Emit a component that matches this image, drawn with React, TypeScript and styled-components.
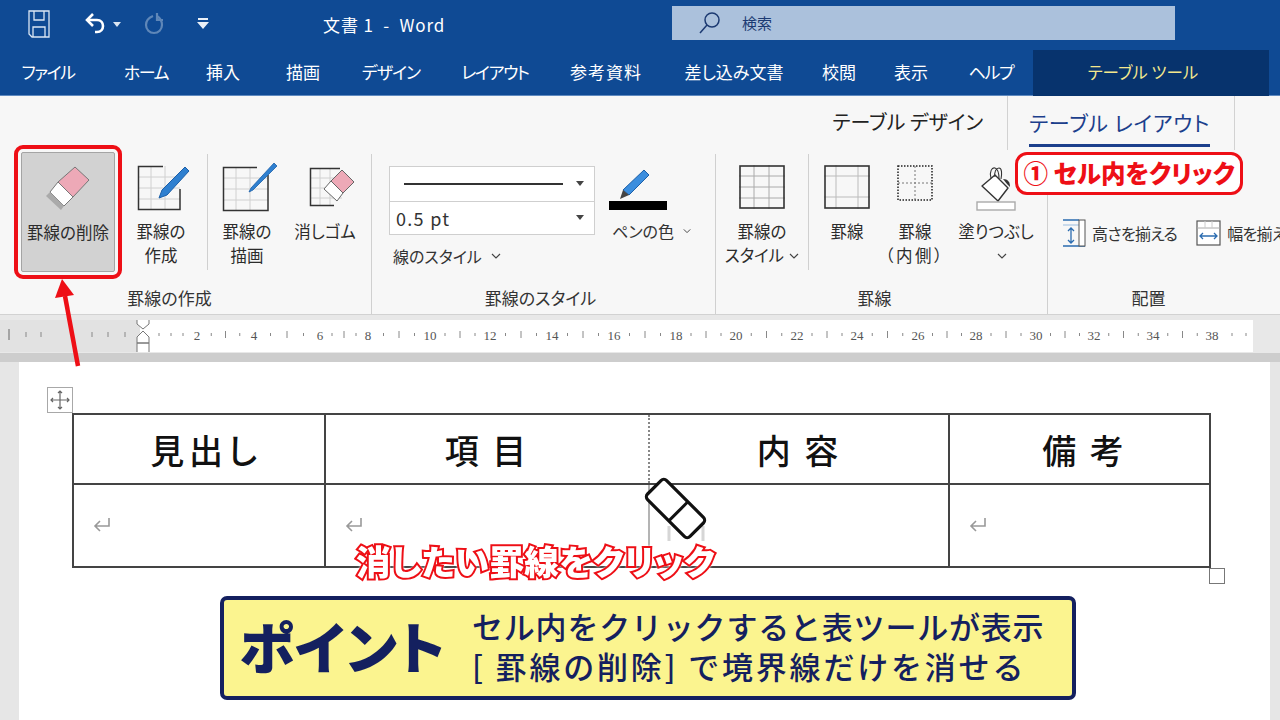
import React from 'react';
import styled, { createGlobalStyle } from 'styled-components';

const GlobalStyle = createGlobalStyle`
    html, body {
        margin: 0;
        padding: 0;
        width: 1280px;
        height: 720px;
        overflow: hidden;
        background: #e6e6e6;
        font-family: "Noto Sans CJK JP", "Liberation Sans", sans-serif;
    }
`;

const Screen = styled.div`
    position: relative;
    width: 1280px;
    height: 720px;
    overflow: hidden;
    font-feature-settings: "palt";
`;

const TitleBar = styled.div`
    height: 48px;
    background: #0f4a94;
    display: flex;
    align-items: center;
    color: #fff;
`;

const QuickIcons = styled.div`
    width: 323px;
    display: flex;
    align-items: center;
    padding-left: 27px;
    box-sizing: border-box;
`;

const DocTitle = styled.div`
    width: 349px;
    font-size: 17px;
    letter-spacing: 0.9px;
    white-space: pre;
`;

const SearchBox = styled.div`
    width: 503px;
    height: 34px;
    margin-top: -3px;
    background: #abc1dc;
    display: flex;
    align-items: center;
    padding-left: 26px;
    box-sizing: border-box;
    gap: 20px;
    color: #1c3a72;
    font-size: 15px;
`;

const TabBar = styled.div`
    height: 48px;
    background: #0f4a94;
    display: flex;
    color: #fff;
    border-bottom: 1px solid #5f8ac0;
    box-sizing: border-box;
`;

const Tab = styled.div<{ $w: number; $track?: number }>`
    width: ${(p) => p.$w}px;
    height: 48px;
    line-height: 48px;
    text-align: center;
    font-size: 17px;
    letter-spacing: ${(p) => p.$track ?? 0}px;
    white-space: nowrap;
`;

const ToolsTab = styled.div`
    width: 236px;
    height: 46px;
    margin: 2px 0 0 15px;
    padding-right: 16px;
    box-sizing: border-box;
    background: #07336d;
    color: #f4e88d;
    font-size: 16.5px;
    line-height: 44px;
    text-align: center;
    white-space: pre;
`;

const Ribbon = styled.div`
    height: 218px;
    background: #f7f7f7;
`;

const ContextTabs = styled.div`
    height: 54px;
    display: flex;
    justify-content: flex-end;
    padding-right: 45px;
    align-items: stretch;
`;

const ContextTab = styled.div<{ $active?: boolean }>`
    font-size: ${(p) => (p.$active ? 21 : 20)}px;
    letter-spacing: ${(p) => (p.$active ? 0.8 : 0)}px;
    white-space: pre;
    line-height: 52px;
    color: ${(p) => (p.$active ? '#1c3f8c' : '#222')};
    padding: ${(p) => (p.$active ? '0 24px 0 21px' : '0 24px 0 0')};
    ${(p) => p.$active && 'border-left: 1px solid #d2d2d2; border-right: 1px solid #d2d2d2;'}
`;

const ActiveLabel = styled.span`
    display: block;
    height: 48px;
    line-height: 52px;
    border-bottom: 3px solid #1c3f8c;
`;

const Groups = styled.div`
    height: 164px;
    display: grid;
    grid-template-columns: 372px 344px 332px 232px;
`;

const Group = styled.div<{ $last?: boolean }>`
    display: grid;
    grid-template-rows: 130px 1fr;
    border-right: ${(p) => (p.$last ? 'none' : '1px solid #d0d0d0')};
    margin-top: 4px;
    min-width: 0;
`;

const GroupBody = styled.div`
    display: flex;
    margin-top: -4px;
    padding-top: 2px;
`;

const GroupLabel = styled.div<{ $shift: number }>`
    font-size: 17px;
    color: #333;
    text-align: center;
    margin-top: 1px;
    padding-right: ${(p) => p.$shift}px;
`;

const Tool = styled.div<{ $w: number; $ml?: number }>`
    width: ${(p) => p.$w}px;
    margin-left: ${(p) => p.$ml ?? 0}px;
    height: 120px;
    flex: none;
    display: flex;
    flex-direction: column;
    align-items: center;
    padding-top: 13px;
    box-sizing: border-box;
    font-size: 16.5px;
    line-height: 24px;
    color: #2c2c2c;
    text-align: center;
    white-space: pre;
`;

const SelectedTool = styled(Tool)`
    background: #d2d2d2;
    border: 1px solid #a4a4a4;
    outline: 4px solid #ee0f16;
    outline-offset: 3px;
    border-radius: 2px;
`;

const IconSlot = styled.div<{ $dx?: number; $dy?: number }>`
    height: 54px;
    display: flex;
    justify-content: center;
    align-items: flex-start;
    padding-left: ${(p) => p.$dx ?? 0}px;
    & > svg {
        margin-top: ${(p) => p.$dy ?? 0}px;
    }
`;

const Parens = styled.span`
    letter-spacing: 2.5px;
`;

const Divider = styled.div`
    width: 1px;
    height: 116px;
    margin-top: 2px;
    background: #d0d0d0;
    flex: none;
`;

const StyleColumn = styled.div`
    margin: 14px 0 0 17px;
    width: 206px;
    flex: none;
`;

const Combo = styled.div`
    border: 1px solid #cfcfcf;
    background: #fff;
    height: 69px;
    box-sizing: border-box;
    display: grid;
    grid-template-rows: 1fr 1fr;
`;

const ComboRow = styled.div`
    display: flex;
    align-items: center;
    justify-content: space-between;
    padding: 0 10px 0 6px;
    font-size: 18px;
    letter-spacing: 1.3px;
    color: #333;
    & + & {
        border-top: 1px solid #cfcfcf;
    }
`;

const SampleLine = styled.div`
    width: 159px;
    height: 2px;
    margin-left: 8px;
    background: #333;
`;

const Caret = styled.div`
    width: 0;
    height: 0;
    border-left: 4px solid transparent;
    border-right: 4px solid transparent;
    border-top: 5px solid #444;
`;

const StyleLabel = styled.div`
    font-size: 16px;
    color: #333;
    margin: 9px 0 0 4px;
    display: flex;
    align-items: center;
    gap: 9px;
`;

const PenColumn = styled.div`
    margin: 17px 0 0 14px;
    width: 82px;
    flex: none;
    font-size: 16px;
    color: #333;
    white-space: nowrap;
`;

const PenLabel = styled.div`
    display: flex;
    align-items: center;
    gap: 9px;
    margin: 3px 0 0 3px;
`;

const Chevron = () => (
    <svg width="10" height="6" viewBox="0 0 10 6" fill="none" stroke="#444" strokeWidth="1.2">
        <path d="M1 1l4 4 4-4" />
    </svg>
);

const InlineChevron = styled.span`
    display: inline-block;
    margin-left: 5px;
    line-height: 0;
    vertical-align: 3px;
`;

const BucketChevron = styled.span`
    display: block;
    line-height: 0;
    margin: 9px 0 0 12px;
`;

const AlignColumn = styled.div`
    display: flex;
    align-items: center;
    height: 30px;
    margin: 66px 0 0 15px;
    gap: 6px;
    font-size: 16px;
    letter-spacing: -0.7px;
    color: #333;
    white-space: nowrap;
`;

const AlignSpacer = styled.div`
    width: 7px;
    flex: none;
`;

const RulerBar = styled.div`
    height: 48px;
    background: linear-gradient(#e8e8e8 38px, #cdcdcd 38px);
    border-top: 1px solid #d2d2d2;
    box-sizing: border-box;
    padding-top: 5px;
`;

const DocArea = styled.div`
    height: 358px;
    background: #e6e6e6;
    padding-left: 19px;
`;

const Page = styled.div`
    width: 1251px;
    height: 358px;
    background: #fff;
    padding: 51px 0 0 53px;
    box-sizing: border-box;
`;

const TableWrap = styled.div`
    position: relative;
    width: 1137px;
`;

const MoveHandle = styled.div`
    position: absolute;
    left: -25px;
    top: -26px;
    width: 24px;
    height: 24px;
    border: 1px solid #a8a8a8;
    display: flex;
    align-items: center;
    justify-content: center;
    background: #fff;
`;

const ResizeHandle = styled.div`
    position: absolute;
    right: -16px;
    bottom: -16px;
    width: 14px;
    height: 14px;
    border: 1px solid #777;
    background: #fff;
`;

const Table = styled.table`
    width: 1137px;
    border-collapse: collapse;
    table-layout: fixed;
`;

const HeadCell = styled.th<{ $w: number; $pad?: number; $track?: number; $dotted?: boolean; $noRight?: boolean }>`
    width: ${(p) => p.$w}px;
    height: 70px;
    padding: 0 0 0 ${(p) => p.$pad ?? 0}px;
    border: 2px solid #444;
    ${(p) => p.$dotted && 'border-left: 2px dotted #888;'}
    ${(p) => p.$noRight && 'border-right: none;'}
    font-size: 34px;
    font-weight: 500;
    color: #111;
    letter-spacing: ${(p) => p.$track ?? 3}px;
    box-sizing: border-box;
    white-space: pre;
`;

const BodyCell = styled.td<{ $erased?: boolean; $noRight?: boolean }>`
    height: 83px;
    padding: 3px 0 0 19px;
    border: 2px solid #444;
    ${(p) => p.$erased && 'border-left: 2px solid #b4b4b4;'}
    ${(p) => p.$noRight && 'border-right: none;'}
    box-sizing: border-box;
`;

const PointBox = styled.div`
    width: 856px;
    height: 104px;
    margin: 28px 0 0 148px;
    box-sizing: border-box;
    background: #fbf48f;
    border: 4px solid #14205f;
    border-radius: 7px;
    display: flex;
    align-items: center;
    color: #14205f;
    padding-left: 15px;
`;

const PointTitle = styled.div`
    width: 233px;
    flex: none;
    margin-top: -8px;
    font-size: 56px;
    font-weight: 900;
    letter-spacing: 1px;
    white-space: nowrap;
`;

const PointText = styled.div`
    margin-top: -4px;
    font-size: 31px;
    font-weight: 500;
    line-height: 40px;
    white-space: pre;
    font-feature-settings: normal;
`;

const PointLine = styled.div<{ $track: number }>`
    height: 40px;
    letter-spacing: ${(p) => p.$track}px;
`;

const Callout = styled.div`
    position: absolute;
    left: 1015px;
    top: 152px;
    width: 228px;
    height: 43px;
    box-sizing: border-box;
    border: 3px solid #ee0f16;
    border-radius: 12px;
    background: #fff;
    color: #ee0f16;
    font-size: 24.5px;
    font-weight: 900;
    line-height: 36px;
    text-align: center;
    white-space: pre;
`;

const RedNote = styled.div`
    position: absolute;
    left: 356px;
    top: 536px;
    font-size: 34.5px;
    font-weight: 900;
    line-height: 48px;
    letter-spacing: 0.4px;
    color: #fff;
    white-space: nowrap;
    -webkit-text-stroke: 4px #ee0f16;
    paint-order: stroke fill;
    filter: drop-shadow(0 0 1px #fff);
`;

const Overlay = styled.svg`
    position: absolute;
    left: 0;
    top: 0;
    pointer-events: none;
`;

const tool = { ink: '#333', grid: '#d0d0d0', blue: '#2f80d0' };

const Grid = ({ w, h, xs, ys, dark = tool.grid }: { w: number; h: number; xs: number[]; ys: number[]; dark?: string }) => (
    <g stroke={dark} strokeWidth="1" fill="none">
        {xs.map((x) => <path key={`x${x}`} d={`M${x} 0V${h}`} />)}
        {ys.map((y) => <path key={`y${y}`} d={`M0 ${y}H${w}`} />)}
    </g>
);

const BigEraser = () => (
    <svg width="44" height="45" viewBox="0 0 44 45">
        <path d="M29 1l14 13-16 17-15-15z" fill="#eda9b7" stroke="#777" strokeWidth="1" strokeLinejoin="round" />
        <path d="M12 16l15 15-9 9-14-14z" fill="#fff" stroke="#777" strokeWidth="1" strokeLinejoin="round" />
        <path d="M4 26l14 14-3 4-15-14z" fill="#aaa" />
    </svg>
);

const GridPenIcon = () => (
    <svg width="54" height="46" viewBox="0 0 54 46">
        <g transform="translate(1 1)">
            <Grid w={42} h={43} xs={[13, 27]} ys={[11, 22, 33]} />
            <path d="M25 0.5H0.5V43.5H42V23" fill="none" stroke={tool.ink} strokeWidth="1.5" />
        </g>
        <path d="M48 2l4 4-22 24-8 3 3-8z" fill={tool.blue} stroke="#1c5fa8" strokeWidth="1" />
    </svg>
);

const GridThinPenIcon = () => (
    <svg width="56" height="50" viewBox="0 0 56 50">
        <g transform="translate(1 5)">
            <Grid w={45} h={43} xs={[13, 27]} ys={[11, 22, 33]} />
            <path d="M34 0.5H0.5V43.5H45V8" fill="none" stroke={tool.ink} strokeWidth="1.5" />
        </g>
        <path d="M52 1l3 3-24 24-4 2 2-4z" fill={tool.blue} stroke="#1c5fa8" strokeWidth="0.8" />
    </svg>
);

const GridEraserIcon = () => (
    <svg width="46" height="40" viewBox="0 0 46 40">
        <g transform="translate(1 1)">
            <Grid w={32} h={37} xs={[10, 20]} ys={[10, 20, 30]} />
            <path d="M30 0.5H0.5V37.5H24" fill="none" stroke={tool.ink} strokeWidth="1.5" />
        </g>
        <path d="M33 3l12 12-11 11-12-12z" fill="#eda9b7" stroke="#666" />
        <path d="M22 14l12 12-6 8-13-12z" fill="#fff" stroke="#666" />
    </svg>
);

const PenColorIcon = () => (
    <svg width="58" height="42" viewBox="0 0 58 42">
        <path d="M35 1l5 5-20 20-6-5z" fill="#3c8ede" stroke="#1c5fa8" />
        <path d="M14 21l6 5-9 4z" fill="#444" />
        <rect x="0" y="32" width="58" height="9" fill="#000" />
    </svg>
);

const FullGridIcon = () => (
    <svg width="46" height="44" viewBox="0 0 46 44">
        <Grid w={46} h={44} xs={[15, 30]} ys={[11, 22, 33]} dark="#aaa" />
        <rect x="1" y="1" width="44" height="42" fill="none" stroke={tool.ink} strokeWidth="1.6" />
    </svg>
);

const BorderIcon = () => (
    <svg width="46" height="44" viewBox="0 0 46 44">
        <Grid w={46} h={44} xs={[12, 34]} ys={[11, 32]} dark="#bbb" />
        <rect x="1" y="1" width="44" height="42" fill="none" stroke={tool.ink} strokeWidth="1.6" />
    </svg>
);

const InnerBorderIcon = () => (
    <svg width="36" height="36" viewBox="0 0 36 36">
        <rect x="1" y="1" width="34" height="34" fill="none" stroke="#222" strokeWidth="1.5" strokeDasharray="1.5 1.5" />
        <path d="M18 1V35M1 18H35" fill="none" stroke="#777" strokeWidth="1" strokeDasharray="2 2" />
    </svg>
);

const BucketIcon = () => (
    <svg width="40" height="46" viewBox="0 0 40 46">
        <path d="M6 21l13-11 13 13-10 13z" fill="#fff" stroke="#333" strokeWidth="1.4" strokeLinejoin="round" />
        <path d="M15 13c-2-6 1-11 4-10s4 5 4 11M19 12c-1-5 1-9 4-9s3 6 2 11" fill="none" stroke="#333" strokeWidth="1.1" />
        <path d="M27 14c5 0 7 3 7 8l-3-3z" fill="#333" />
        <rect x="1" y="37" width="38" height="8" fill="#fff" stroke="#aaa" strokeWidth="1.4" />
    </svg>
);

const HeightIcon = () => (
    <svg width="23" height="28" viewBox="0 0 23 28" style={{ flex: 'none' }}>
        <path d="M0 1H16M0 27H22" stroke="#2b6cb0" strokeWidth="1.6" />
        <path d="M0 6H16" stroke="#9bbde0" strokeWidth="1" />
        <rect x="16" y="1" width="6" height="26" fill="#fff" stroke="#555" />
        <path d="M8 9V24M5 12l3-3 3 3M5 21l3 3 3-3" fill="none" stroke="#2b6cb0" strokeWidth="1.3" />
    </svg>
);

const WidthIcon = () => (
    <svg width="25" height="26" viewBox="0 0 25 26" style={{ flex: 'none' }}>
        <rect x="1" y="1" width="23" height="24" fill="#fff" stroke="#555" strokeWidth="1.2" />
        <path d="M1 8H24" stroke="#aaa" />
        <path d="M9 1V8M16 1V8" stroke="#ccc" />
        <path d="M4 16H21M7 13l-3 3 3 3M18 13l3 3-3 3" fill="none" stroke="#2b6cb0" strokeWidth="1.3" />
    </svg>
);

const ReturnMark = () => (
    <svg width="18" height="17" viewBox="0 0 18 17" fill="none" stroke="#999" strokeWidth="1.6">
        <path d="M16 1V9H2M7 4L2 9l5 5" />
    </svg>
);

const rulerLabels: [number, string][] = [
    [197, '2'], [254, '4'], [320, '6'], [368, '8'], [430, '10'], [490, '12'], [552, '14'], [614, '16'], [676, '18'],
    [736, '20'], [797, '22'], [857, '24'], [918, '26'], [976, '28'], [1036, '30'], [1094, '32'], [1153, '34'], [1212, '38'],
];

const Ruler = () => {
    const ticks: number[] = [];
    rulerLabels.forEach(([x], i) => {
        const next = rulerLabels[i + 1]?.[0];
        if (next) {
            const step = (next - x) / 4;
            ticks.push(x + step, x + step * 2, x + step * 3);
        }
    });
    return (
        <svg width="1280" height="32" viewBox="0 0 1280 32" style={{ display: 'block' }}>
            <rect x="140" width="1113" height="32" fill="#fff" />
            <rect width="140" height="32" fill="#e2e2e2" />
            <path d="M9 9V20" stroke="#666" strokeWidth="1" />
            {[26, 41, 92, 108, 125].map((x) => <path key={x} d={`M${x} 12V17`} stroke="#888" />)}
            {[159, 171, 183].map((x) => <path key={x} d={`M${x} 13V16`} stroke="#888" />)}
            {ticks.map((x, i) => (
                <path key={x} d={i % 3 === 1 ? `M${x} 11V18` : `M${x} 13V16`} stroke="#888" />
            ))}
            {[1232, 1246].map((x) => <path key={x} d={`M${x} 13V16`} stroke="#888" />)}
            {rulerLabels.map(([x, label]) => (
                <text key={label} x={x} y="20" textAnchor="middle" fontSize="13" fontFamily="'Liberation Serif', serif" fill="#555">
                    {label}
                </text>
            ))}
            <path d="M137 -1h12v5l-6 5-6-5z M143 11l6 6v6h-12v-6z M137 23h12v10h-12z" fill="#fff" stroke="#777" />
        </svg>
    );
};

const App: React.FC = () => {
    return (
        <Screen>
            <GlobalStyle />
            <TitleBar>
                <QuickIcons>
                    <svg width="24" height="28" viewBox="0 0 24 28" fill="none" stroke="#dbe6f3" strokeWidth="1.3">
                        <path d="M2 1H22V27H5L2 24z" />
                        <path d="M7 1V10H17V1M6 27V17H18V27" />
                    </svg>
                    <svg width="22" height="24" viewBox="0 0 22 24" fill="none" stroke="#fff" strokeWidth="2.6" style={{ marginLeft: 34 }}>
                        <path d="M8 2L2 8l6 6" />
                        <path d="M3 8h9c4 0 6 3 6 6s-2 6-6 6H10" />
                    </svg>
                    <svg width="8" height="5" viewBox="0 0 8 5" style={{ marginLeft: 6 }}>
                        <path d="M0 0h8L4 5z" fill="#dbe6f3" />
                    </svg>
                    <svg width="22" height="24" viewBox="0 0 22 24" fill="none" stroke="#5f87b8" strokeWidth="2.2" style={{ marginLeft: 23 }}>
                        <path d="M9 4C4 6 2 9 2 13a8 8 0 0 0 16 0c0-4-2-7-5-9" />
                        <path d="M13 1v7h6" />
                    </svg>
                    <svg width="12" height="12" viewBox="0 0 12 12" style={{ marginLeft: 31 }}>
                        <path d="M1 0h10v2H1zM0 4h12L6 11z" fill="#eaf0f8" />
                    </svg>
                </QuickIcons>
                <DocTitle>{'文書 1  -  Word'}</DocTitle>
                <SearchBox>
                    <svg width="24" height="24" viewBox="0 0 24 24" fill="none" stroke="#1c3a72" strokeWidth="1.5">
                        <circle cx="14" cy="9" r="7" />
                        <path d="M9 14L2 22" />
                    </svg>
                    検索
                </SearchBox>
            </TitleBar>
            <TabBar>
                <Tab $w={96} $track={-1.5}>ファイル</Tab>
                <Tab $w={100} $track={-1.5}>ホーム</Tab>
                <Tab $w={54}>挿入</Tab>
                <Tab $w={106}>描画</Tab>
                <Tab $w={70} $track={-1}>デザイン</Tab>
                <Tab $w={138} $track={-1.4}>レイアウト</Tab>
                <Tab $w={84} $track={1}>参考資料</Tab>
                <Tab $w={172}>差し込み文書</Tab>
                <Tab $w={38}>校閲</Tab>
                <Tab $w={106}>表示</Tab>
                <Tab $w={54} $track={-1.3}>ヘルプ</Tab>
                <ToolsTab>{'テーブル ツール'}</ToolsTab>
            </TabBar>
            <Ribbon>
                <ContextTabs>
                    <ContextTab>{'テーブル デザイン'}</ContextTab>
                    <ContextTab $active>
                        <ActiveLabel>{'テーブル レイアウト'}</ActiveLabel>
                    </ContextTab>
                </ContextTabs>
                <Groups>
                    <Group>
                        <GroupBody>
                            <SelectedTool $w={94} $ml={21}>
                                <IconSlot><BigEraser /></IconSlot>
                                罫線の削除
                            </SelectedTool>
                            <Tool $w={92}>
                                <IconSlot $dx={6}><GridPenIcon /></IconSlot>
                                {'罫線の\n作成'}
                            </Tool>
                            <Divider />
                            <Tool $w={78}>
                                <IconSlot $dx={6} $dy={-3}><GridThinPenIcon /></IconSlot>
                                {'罫線の\n描画'}
                            </Tool>
                            <Tool $w={78}>
                                <IconSlot $dx={14} $dy={2}><GridEraserIcon /></IconSlot>
                                消しゴム
                            </Tool>
                        </GroupBody>
                        <GroupLabel $shift={32}>罫線の作成</GroupLabel>
                    </Group>
                    <Group>
                        <GroupBody>
                            <StyleColumn>
                                <Combo>
                                    <ComboRow><SampleLine /><Caret /></ComboRow>
                                    <ComboRow>0.5 pt<Caret /></ComboRow>
                                </Combo>
                                <StyleLabel>線のスタイル<Chevron /></StyleLabel>
                            </StyleColumn>
                            <PenColumn>
                                <PenColorIcon />
                                <PenLabel>ペンの色<Chevron /></PenLabel>
                            </PenColumn>
                        </GroupBody>
                        <GroupLabel $shift={6}>罫線のスタイル</GroupLabel>
                    </Group>
                    <Group>
                        <GroupBody>
                            <Tool $w={92}>
                                <IconSlot><FullGridIcon /></IconSlot>
                                <span>罫線の<br />スタイル<InlineChevron><Chevron /></InlineChevron></span>
                            </Tool>
                            <Divider />
                            <Tool $w={76}>
                                <IconSlot><BorderIcon /></IconSlot>
                                罫線
                            </Tool>
                            <Tool $w={60}>
                                <IconSlot><InnerBorderIcon /></IconSlot>
                                罫線
                                <Parens>（内側）</Parens>
                            </Tool>
                            <Tool $w={102}>
                                <IconSlot><BucketIcon /></IconSlot>
                                塗りつぶし
                                <BucketChevron><Chevron /></BucketChevron>
                            </Tool>
                        </GroupBody>
                        <GroupLabel $shift={14}>罫線</GroupLabel>
                    </Group>
                    <Group $last>
                        <GroupBody>
                            <AlignColumn>
                                <HeightIcon />
                                高さを揃える
                                <AlignSpacer />
                                <WidthIcon />
                                幅を揃える
                            </AlignColumn>
                        </GroupBody>
                        <GroupLabel $shift={50}>配置</GroupLabel>
                    </Group>
                </Groups>
            </Ribbon>
            <RulerBar>
                <Ruler />
            </RulerBar>
            <DocArea>
                <Page>
                    <TableWrap>
                        <MoveHandle>
                            <svg width="20" height="20" viewBox="0 0 20 20" fill="none" stroke="#666" strokeWidth="1.2">
                                <path d="M10 1V19M1 10H19M8 3l2-2 2 2M8 17l2 2 2-2M3 8l-2 2 2 2M17 8l2 2-2 2" />
                            </svg>
                        </MoveHandle>
                        <Table>
                            <thead>
                                <tr>
                                    <HeadCell $w={252} $pad={14} $track={5}>見出し</HeadCell>
                                    <HeadCell $w={324} $noRight>{'項 目'}</HeadCell>
                                    <HeadCell $w={300} $dotted>{'内 容'}</HeadCell>
                                    <HeadCell $w={261} $pad={10}>{'備 考'}</HeadCell>
                                </tr>
                            </thead>
                            <tbody>
                                <tr>
                                    <BodyCell><ReturnMark /></BodyCell>
                                    <BodyCell $noRight><ReturnMark /></BodyCell>
                                    <BodyCell $erased />
                                    <BodyCell><ReturnMark /></BodyCell>
                                </tr>
                            </tbody>
                        </Table>
                        <ResizeHandle />
                    </TableWrap>
                    <PointBox>
                        <PointTitle>ポイント</PointTitle>
                        <PointText>
                            <PointLine $track={0.8}>セル内をクリックすると表ツールが表示</PointLine>
                            <PointLine $track={2.8}>{'[ 罫線の削除] で境界線だけを消せる'}</PointLine>
                        </PointText>
                    </PointBox>
                </Page>
            </DocArea>
            <Callout>{'① セル内をクリック'}</Callout>
            <RedNote>消したい罫線をクリック</RedNote>
            <Overlay width="1280" height="720" viewBox="0 0 1280 720">
                <path d="M78 366L65 296" stroke="#ee0f16" strokeWidth="4.5" fill="none" />
                <path d="M62 279L74 295L55 298z" fill="#ee0f16" />
                <path d="M669 526V541M703 526V541" stroke="#bbb" strokeWidth="3" opacity="0.6" />
                <g transform="translate(675.5 508.5) rotate(45)">
                    <rect x="-30" y="-13.5" width="60" height="27" rx="4" fill="#fff" stroke="#111" strokeWidth="3.2" />
                    <path d="M4 -13.5V13.5" stroke="#111" strokeWidth="3" />
                </g>
            </Overlay>
        </Screen>
    );
};

export default App;
